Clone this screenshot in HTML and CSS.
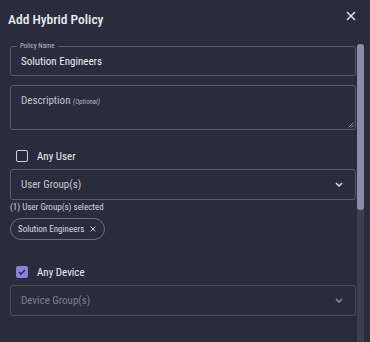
FILE: index.html
```html
<!DOCTYPE html>
<html>
<head>
<meta charset="utf-8">
<link rel="stylesheet" href="styles.css">
</head>
<body>
<div class="dialog">
  <div class="header">
    <div class="title">Add Hybrid Policy</div>
    <svg class="close" width="10" height="10" viewBox="0 0 10 10"><path d="M1 1L9 9M9 1L1 9" stroke="#e6e7ee" stroke-width="1.4" fill="none"/></svg>
  </div>
  <div class="body">
    <div class="content">
      <div class="field name-field">
        <span class="legend">Policy Name</span>
        <span class="value">Solution Engineers</span>
      </div>
      <div class="field desc-field">
        <span class="placeholder">Description <i class="opt">(Optional)</i></span>
        <svg class="resize" width="6" height="6" viewBox="0 0 6 6"><path d="M5.5 0.5L0.5 5.5M5.5 3L3 5.5" stroke="#9a9cab" stroke-width="0.9"/></svg>
      </div>
      <div class="check-row user-row">
        <span class="box"></span>
        <span class="check-label">Any User</span>
      </div>
      <div class="field select">
        <span class="placeholder">User Group(s)</span>
        <svg class="chev" width="8" height="5" viewBox="0 0 8 5"><path d="M1 1L4 4L7 1" stroke="#d8d9e0" stroke-width="1.5" fill="none"/></svg>
      </div>
      <div class="helper">(1) User Group(s) selected</div>
      <div class="chips">
        <span class="chip">Solution Engineers
          <svg class="chip-x" width="6" height="6" viewBox="0 0 6 6"><path d="M0.5 0.5L5.5 5.5M5.5 0.5L0.5 5.5" stroke="#c9cbd4" stroke-width="1"/></svg>
        </span>
      </div>
      <div class="check-row device-row">
        <span class="box checked"><svg width="8" height="6" viewBox="0 0 8 6"><path d="M1 3L3 5L7 1" stroke="#2a2c3b" stroke-width="1.5" fill="none"/></svg></span>
        <span class="check-label">Any Device</span>
      </div>
      <div class="field select disabled">
        <span class="placeholder">Device Group(s)</span>
        <svg class="chev" width="8" height="5" viewBox="0 0 8 5"><path d="M1 1L4 4L7 1" stroke="#8a8c9b" stroke-width="1.5" fill="none"/></svg>
      </div>
    </div>
    <div class="scrollbar"><div class="thumb"></div></div>
  </div>
</div>
</body>
</html>
```
FILE: styles.css
```css
html, body {
  margin: 0;
  padding: 0;
  background: #2a2c3b;
}
body {
  font-family: "Liberation Sans Narrow", "Roboto Condensed", "Liberation Sans", sans-serif;
  color: #e6e7ee;
}
.dialog {
  width: 370px;
  height: 342px;
  display: flex;
  flex-direction: column;
  overflow: hidden;
}
.header {
  height: 38px;
  flex: none;
  display: flex;
  align-items: center;
  justify-content: space-between;
  padding: 0 14px 0 8px;
  box-sizing: border-box;
}
.title {
  font-size: 13.5px;
  font-weight: 500;
  color: #eceef3;
}
.close { display: block; margin-top: -6px; }
.body {
  flex: 1;
  display: flex;
}
.content {
  width: 356px;
  padding-left: 10px;
  box-sizing: border-box;
  flex: none;
}
.field {
  position: relative;
  border: 1px solid #585b6a;
  border-radius: 3px;
  box-sizing: border-box;
  display: flex;
  align-items: center;
  padding-left: 10px;
}
.name-field {
  margin-top: 8px;
  height: 30px;
}
.legend {
  position: absolute;
  left: 6px;
  top: -5px;
  font-size: 7px;
  line-height: 9px;
  padding: 0 3px;
  background: #2a2c3b;
  color: #b9bbc6;
}
.value {
  font-size: 11px;
  color: #eceef3;
  padding-top: 1px;
}
.desc-field {
  margin-top: 9px;
  height: 45px;
  align-items: flex-start;
  padding-top: 8px;
}
.placeholder {
  font-size: 11px;
  color: #c4c6cf;
}
.opt {
  font-size: 7px;
  color: #b4b6c1;
}
.resize {
  position: absolute;
  right: 1px;
  bottom: 1px;
}
.check-row {
  display: flex;
  align-items: center;
  height: 24px;
  padding-left: 6px;
}
.user-row { margin-top: 14px; }
.device-row { margin-top: 20px; }
.box {
  width: 12px;
  height: 12px;
  box-sizing: border-box;
  border: 1.5px solid #cfd1da;
  border-radius: 2px;
  display: flex;
  align-items: center;
  justify-content: center;
}
.box.checked {
  background: #8c80de;
  border-color: #8c80de;
}
.check-label {
  margin-left: 9px;
  font-size: 11px;
  color: #eceef3;
}
.select {
  height: 31px;
  margin-top: 1px;
  justify-content: space-between;
  padding-right: 12px;
}
.select.disabled {
  border-color: #474a59;
}
.select.disabled .placeholder {
  color: #7c7f8f;
}
.helper {
  font-size: 9px;
  line-height: 14px;
  color: #d2d4dc;
}
.chips {
  margin-top: 4px;
  display: flex;
}
.chip {
  height: 22px;
  box-sizing: border-box;
  border: 1px solid #6a6d7c;
  border-radius: 11px;
  display: flex;
  align-items: center;
  padding: 0 8px 0 7px;
  font-size: 9px;
  color: #d7d9e0;
}
.chip-x { margin-left: 6px; }
.scrollbar {
  width: 7px;
  margin-left: 1px;
  margin-top: 6px;
  background: #3b3e51;
  border-radius: 3px 3px 0 0;
}
.thumb {
  height: 166px;
  background: #8a8da5;
  border-radius: 3px;
}
```
